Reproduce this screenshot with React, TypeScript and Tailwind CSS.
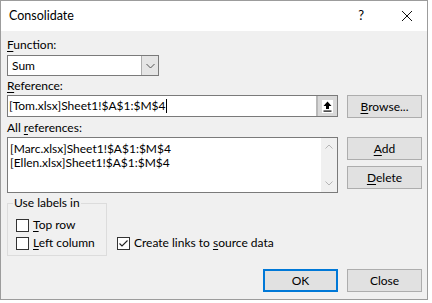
import type { ReactNode } from 'react';

function Btn({ children, primary = false }: { children: ReactNode; primary?: boolean }) {
  return (
    <div
      className={
        primary
          ? 'w-[75px] h-[23px] flex items-center justify-center bg-[#e1e1e1] border-2 border-[#0078d7]'
          : 'w-[75px] h-[23px] flex items-center justify-center bg-[#e1e1e1] border border-[#adadad]'
      }
    >
      {children}
    </div>
  );
}

function Check({ checked = false }: { checked?: boolean }) {
  return (
    <span className="w-[13px] h-[13px] shrink-0 border border-[#333333] bg-white flex items-center justify-center">
      {checked && (
        <svg width="11" height="11" viewBox="0 0 11 11">
          <path d="M1.5 5.5 L4 8 L9.5 2.5" fill="none" stroke="#222" strokeWidth="1.1" />
        </svg>
      )}
    </span>
  );
}

function U({ children }: { children: ReactNode }) {
  return <span className="underline underline-offset-[2px] decoration-1">{children}</span>;
}

export default function App() {
  return (
    <div className="w-[432px] h-[303px] bg-white font-['Lato',sans-serif] text-[12px] text-black">
      <div className="w-[428px] h-[300px] border border-[#9c9c9c] flex flex-col">
        {/* title bar */}
        <div className="h-[30px] bg-white flex items-center pl-[8px] pr-[14px]">
          <span className="text-[12.5px]">Consolidate</span>
          <span className="ml-auto mr-[37px] text-[13px]">?</span>
          <svg width="12" height="12" viewBox="0 0 12 12">
            <path d="M1 1 L11 11 M11 1 L1 11" stroke="#111" strokeWidth="1" />
          </svg>
        </div>

        {/* body */}
        <div className="flex-1 bg-[#f0f0f0] pl-[6px] pt-[6px] flex flex-col">
          <div className="h-[16px] leading-[16px]">
            <U>F</U>unction:
          </div>
          <div className="mt-[2px] w-[152px] h-[21px] bg-white border border-[#7a7a7a] flex">
            <span className="flex-1 pl-[4px] leading-[19px]">Sum</span>
            <span className="w-[17px] h-full bg-[#e5e5e5] border-l border-[#adadad] flex items-center justify-center">
              <svg width="9" height="6" viewBox="0 0 9 6">
                <path d="M0.5 1 L4.5 5 L8.5 1" fill="none" stroke="#555" strokeWidth="1" />
              </svg>
            </span>
          </div>

          <div className="mt-[2px] h-[16px] leading-[16px]">
            <U>R</U>eference:
          </div>
          <div className="mt-[1px] flex items-start gap-[9px]">
            <div className="w-[331px] h-[22px] bg-white border border-[#7a7a7a] flex">
              <span className="flex-1 pl-[1px] leading-[20px] flex items-center">
                [Tom.xlsx]Sheet1!$A$1:$M$4
                <span className="w-px h-[14px] bg-black ml-px" />
              </span>
              <span className="w-[21px] h-full bg-[#d9d9d9] border-l-2 border-[#b9b9b9] flex items-center justify-center">
                <span className="w-[11px] h-[13px] bg-white flex items-center justify-center">
                  <svg width="9" height="11" viewBox="0 0 9 11">
                    <path d="M4.5 0.5 L8.5 5 L6 5 L6 8 L3 8 L3 5 L0.5 5 Z" fill="#000" />
                    <rect x="0.5" y="9.5" width="8" height="1.2" fill="#000" />
                  </svg>
                </span>
              </span>
            </div>
            <Btn>
              <U>B</U>rowse...
            </Btn>
          </div>

          <div className="mt-[2px] h-[16px] leading-[16px]">
            All <U>r</U>eferences:
          </div>
          <div className="mt-[1px] flex items-start gap-[9px]">
            <div className="w-[331px] h-[56px] bg-white border border-[#7a7a7a] flex">
              <div className="flex-1 pl-[2px] pt-[4px] leading-[14px]">
                <div>[Marc.xlsx]Sheet1!$A$1:$M$4</div>
                <div>[Ellen.xlsx]Sheet1!$A$1:$M$4</div>
              </div>
              <div className="w-[16px] h-full bg-[#f0f0f0] flex flex-col items-center justify-between py-[6px]">
                <svg width="8" height="5" viewBox="0 0 8 5">
                  <path d="M0.5 4.5 L4 1 L7.5 4.5" fill="none" stroke="#b5b5b5" strokeWidth="1" />
                </svg>
                <svg width="8" height="5" viewBox="0 0 8 5">
                  <path d="M0.5 0.5 L4 4 L7.5 0.5" fill="none" stroke="#b5b5b5" strokeWidth="1" />
                </svg>
              </div>
            </div>
            <div className="flex flex-col gap-[6px]">
              <Btn>
                <U>A</U>dd
              </Btn>
              <Btn>
                <U>D</U>elete
              </Btn>
            </div>
          </div>

          <div className="mt-[3px] flex items-end gap-[10px]">
            <fieldset className="w-[100px] h-[60px] border border-[#dcdcdc] pl-[8px] pt-[7px]">
              <legend className="-ml-[3px] px-[1px] leading-[14px]">Use labels in</legend>
              <div className="h-[16px] flex items-center gap-[4px]">
                <Check />
                <span>
                  <U>T</U>op row
                </span>
              </div>
              <div className="mt-[2px] h-[16px] flex items-center gap-[4px]">
                <Check />
                <span>
                  <U>L</U>eft column
                </span>
              </div>
            </fieldset>
            <div className="h-[16px] mb-[5px] flex items-center gap-[4px]">
              <Check checked />
              <span>
                Create links to <U>s</U>ource data
              </span>
            </div>
          </div>

          <div className="mt-[13px] flex justify-end gap-[9px] pr-[5px]">
            <Btn primary>OK</Btn>
            <Btn>Close</Btn>
          </div>
        </div>
      </div>
    </div>
  );
}
